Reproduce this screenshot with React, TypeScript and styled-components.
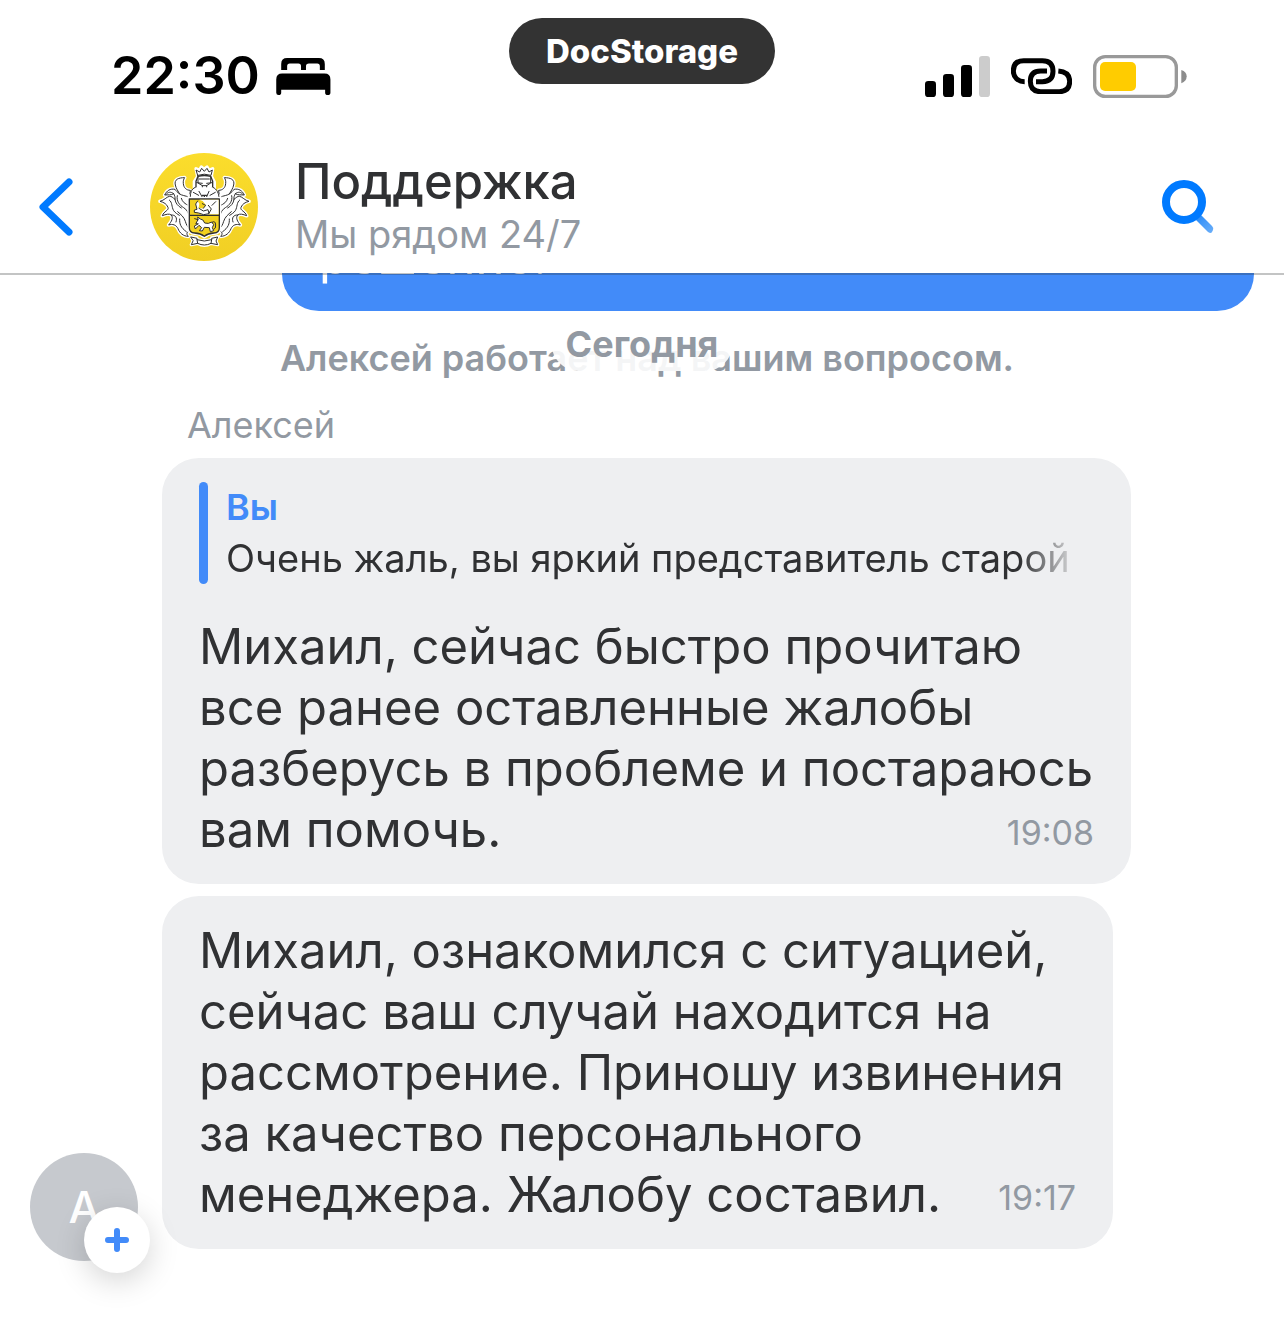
import React from "react";
import styled, { createGlobalStyle } from "styled-components";

const color = {
  ink: "#303133",
  muted: "#9299a2",
  blue: "#428bf9",
  action: "#007aff",
  bubble: "#eeeff1",
};

const GlobalStyle = createGlobalStyle`
  *, *::before, *::after { box-sizing: border-box; }
  body {
    margin: 0;
    background: #fff;
    color: ${color.ink};
    font-family: Inter, Roboto, "Liberation Sans", sans-serif;
  }
  button { border: 0; padding: 0; background: none; font: inherit; cursor: pointer; }
  svg { display: block; flex: none; }
  p, h1, h2 { margin: 0; }
`;

const Screen = styled.div`
  min-height: 100vh;
  display: flex;
  flex-direction: column;
  overflow: hidden;
`;

const TopBar = styled.header`
  position: relative;
  z-index: 2;
  margin-bottom: -2px;
  background: #fff;
  background-clip: padding-box;
  border-bottom: 2px solid rgba(40, 44, 44, 0.28);
`;

const StatusBar = styled.div`
  display: grid;
  grid-template-columns: 1fr auto 1fr;
  align-items: center;
  height: 134px;
  padding: 18px 97px 0;
`;

const StatusGroup = styled.div<{ $end?: boolean; $gap: number }>`
  display: flex;
  align-items: center;
  justify-content: ${(p) => (p.$end ? "flex-end" : "flex-start")};
  gap: ${(p) => p.$gap}px;
  padding-left: ${(p) => (p.$end ? 0 : 14)}px;
`;

const Clock = styled.time`
  font-size: 52px;
  font-weight: 600;
  line-height: 60px;
  color: #000;
`;

const AppPill = styled.div`
  align-self: start;
  padding: 0 37px;
  border-radius: 33px;
  background: #333;
  color: #fff;
  font-size: 33px;
  font-weight: 800;
  line-height: 66px;
`;

const NavRow = styled.div`
  display: flex;
  align-items: center;
  padding: 19px 70px 12px 39px;
`;

const BackButton = styled.button`
  width: 111px;
`;

const Titles = styled.div`
  flex: 1;
  padding: 0 0 4px 37px;
`;

const Title = styled.h1`
  font-size: 49px;
  font-weight: 500;
  line-height: 58px;
`;

const Subtitle = styled.p`
  font-size: 38px;
  line-height: 46px;
  color: ${color.muted};
`;

const Chat = styled.main`
  position: relative;
  flex: 1;
  display: flex;
  flex-direction: column;
`;

const Bubble = styled.article<{ $own?: boolean; $inset?: number }>`
  padding: 24px 37px;
  border-radius: 37px;
  background: ${(p) => (p.$own ? color.blue : color.bubble)};
  color: ${(p) => (p.$own ? "#fff" : color.ink)};
  margin-right: ${(p) => p.$inset ?? 0}px;
`;

const OwnRow = styled.div`
  margin-top: -71px;
  padding: 0 30px 0 282px;
`;

const Body = styled.p`
  font-size: 49px;
  line-height: 61px;
  white-space: pre-line;
`;

const SystemNote = styled.p`
  padding: 25px 0 0 10px;
  text-align: center;
  font-size: 36px;
  font-weight: 600;
  line-height: 44px;
  color: ${color.muted};
`;

const DateBadge = styled.div`
  position: absolute;
  top: 44px;
  left: 50%;
  transform: translateX(-50%);
  padding: 5px 14px;
  border-radius: 27px;
  background: rgba(255, 255, 255, 0.9);
  font-size: 36px;
  font-weight: 700;
  line-height: 44px;
  color: ${color.muted};
`;

const Thread = styled.section`
  display: grid;
  grid-template-columns: 162px 1fr;
  padding: 24px 153px 48px 0;
`;

const AvatarCell = styled.div`
  align-self: end;
  padding-left: 30px;
`;

const Avatar = styled.div`
  position: relative;
  display: grid;
  place-items: center;
  width: 108px;
  height: 108px;
  border-radius: 50%;
  background: #c6c9ce;
  color: #fff;
  font-size: 44px;
  font-weight: 500;
`;

const AddButton = styled.button`
  position: absolute;
  right: -12px;
  bottom: -12px;
  display: grid;
  place-items: center;
  width: 66px;
  height: 66px;
  border-radius: 50%;
  background: #fff;
  box-shadow: 0 8px 30px rgba(0, 0, 0, 0.17);
`;

const Messages = styled.div`
  display: flex;
  flex-direction: column;
  gap: 12px;
  min-width: 0;
  padding-bottom: 12px;
`;

const Author = styled.h2`
  padding-left: 25px;
  font-size: 36px;
  font-weight: 400;
  line-height: 42px;
  color: ${color.muted};
`;

const Quote = styled.blockquote`
  position: relative;
  margin: 0 0 32px;
  padding-left: 27px;
  &::before {
    content: "";
    position: absolute;
    inset: 0 auto 0 0;
    width: 9px;
    border-radius: 5px;
    background: ${color.blue};
  }
`;

const QuoteAuthor = styled.p`
  font-size: 36px;
  font-weight: 600;
  line-height: 51px;
  color: ${color.blue};
`;

const QuoteText = styled.p`
  width: 854px;
  max-width: 100%;
  overflow: hidden;
  white-space: nowrap;
  font-size: 38px;
  line-height: 51px;
  mask-image: linear-gradient(to right, #000 calc(100% - 60px), transparent);
`;

const LastLine = styled.div`
  display: flex;
  justify-content: space-between;
  align-items: center;
`;

const Stamp = styled.time`
  padding-top: 6px;
  font-size: 34px;
  line-height: 40px;
  color: ${color.muted};
`;

const BedIcon = () => (
  <svg width="55" height="37" viewBox="555 177 165 112" aria-hidden="true">
    <path d="M570 213V195Q570 177 588 177H684Q702 177 702 195V213H687V202Q687 194 679 194H654Q645 194 645 202V213H630V202Q630 194 622 194H596Q588 194 588 202V213Z" />
    <path d="M555 242Q555 224 573 224H701Q719 224 719 242V282Q719 289 711 289Q703 289 703 282V273H570V282Q570 289 562 289Q555 289 555 282Z" />
  </svg>
);

const SignalIcon = () => (
  <svg width="65" height="41" viewBox="75 75 195 123" aria-hidden="true">
    <rect x="75" y="150" width="33" height="48" rx="10" />
    <rect x="129" y="129" width="33" height="69" rx="10" />
    <rect x="183" y="102" width="33" height="96" rx="10" />
    <rect x="237" y="75" width="33" height="123" rx="10" fill="#ccc" />
  </svg>
);

const LinkIcon = () => (
  <svg width="61" height="36" viewBox="333 87 183 108" fill="none" stroke="#000" strokeWidth="15" aria-hidden="true">
    <path d="M374 158C354 158 340 145 340 126Q340 95 371 95H427Q459 95 459 127Q459 158 427 158H408" />
    <path d="M441 126H422Q391 126 391 157Q391 188 422 188H478Q509 188 509 157Q509 129 475 126" />
  </svg>
);

const BatteryIcon = () => (
  <svg width="94" height="43" viewBox="579 72 282 129" aria-hidden="true">
    <rect x="584" y="77" width="245" height="119" rx="32" fill="none" stroke="#999" strokeWidth="10" />
    <rect x="600" y="93" width="108" height="87" rx="15" fill="#fc0" />
    <path d="M844 117Q860 122 860 136Q860 151 844 157Z" fill="#8c8c8c" />
  </svg>
);

const BackIcon = () => (
  <svg width="35" height="58" viewBox="0 0 35 58" fill="none" stroke={color.action} strokeWidth="7" strokeLinecap="round" strokeLinejoin="round">
    <path d="M30 4L4 29L30 54" />
  </svg>
);

const SearchIcon = () => (
  <svg width="52" height="54" viewBox="0 0 52 54" fill="none">
    <defs>
      <linearGradient id="handle" x1="36" y1="36" x2="50" y2="52" gradientUnits="userSpaceOnUse">
        <stop stopColor="#2b8cf8" />
        <stop offset="1" stopColor="#68adf9" />
      </linearGradient>
    </defs>
    <path d="M34 40L39 35L50 46Q52 48 51 50L50 52Q49 54 46 52Z" fill="url(#handle)" />
    <circle cx="22" cy="22" r="18" stroke={color.action} strokeWidth="8" />
  </svg>
);

const wing =
  "M150 136C139 136 131 128 130 116C129 108 131 102 134 98C116 98 102 103 106 120C108 131 115 139 119 147C113 142 108 138 105 133C91 130 80 137 74 150C84 149 94 151 101 146C104 152 106 157 105 163C98 158 95 153 88 154C79 156 73 166 60 169C72 172 80 177 84 187C88 196 71 199 67 212C78 208 87 205 94 210C101 219 94 230 86 240C98 236 108 239 114 251C119 264 130 274 145 274C139 268 139 262 148 258V160Z";

const Feathers = () => (
  <g>
    <path d={wing} fill="#fff" stroke="#fff" strokeWidth="11" />
    <path d={wing} fill="#fff" />
    <path d="M78 148C84 141 92 139 101 146M119 147C125 152 136 151 147 157M105 163C106 175 114 183 124 189M88 165C98 173 94 185 101 197C106 204 112 207 118 211M112 152C108 168 119 181 131 188C140 194 145 201 147 213M124 160C127 171 135 177 147 182M94 210C106 209 113 218 108 231M113 200C123 209 132 216 136 229C139 240 143 246 148 249M119 222C118 236 122 248 139 260" />
  </g>
);

const CrestLogo = () => (
  <svg width="108" height="108" viewBox="30 24 324 324" role="img" aria-label="Герб">
    <defs>
      <linearGradient id="gold" x1="0" y1="0" x2="0" y2="1">
        <stop stopColor="#fbdd2c" />
        <stop offset="1" stopColor="#f1cf24" />
      </linearGradient>
    </defs>
    <circle cx="192" cy="186" r="162" fill="url(#gold)" />
    <g fill="none" stroke="#303030" strokeWidth="3" strokeLinejoin="round" strokeLinecap="round">
      <Feathers />
      <g transform="translate(387 0) scale(-1 1)">
        <Feathers />
      </g>
      <path d="M168 71L179 76L184 66L192 73L201 66L207 76L218 71L214 94L223 111V139L240 157V162H147V157L163 139V110L173 94Z" fill="#fff" stroke="#fff" strokeWidth="10" />
      <path d="M173 91L168 75L179 81L185 70L193 79L201 70L207 81L217 75L213 91Q193 84 173 91Z" fill="#fff" />
      <path d="M174 94Q193 89 212 94L218 109V127L207 140L193 147L178 139L168 127V109Z" fill="#fff" strokeWidth="4" />
      <path d="M174 96V114L187 122V137M212 96V114L200 122V137M187 122H200M170 113L187 115M216 113L200 115M178 102H208" />
      <path d="M166 127C152 132 151 146 151 160H237C237 146 231 132 219 127M177 139L190 162M207 139L197 162M160 142L176 151M226 142L210 151" fill="#fff" />
      <path d="M187 151H200M193 151V163" strokeWidth="4" />
      <path d="M148 162H238V248Q238 263 222 264Q204 265 193 274Q182 265 164 264Q148 263 148 248Z" fill="#f2d11f" stroke="#fff" strokeWidth="12" />
      <path d="M148 162H238V248Q238 263 222 264Q204 265 193 274Q182 265 164 264Q148 263 148 248Z" fill="#f2d11f" strokeWidth="4" />
      <path d="M178 164H236V208H208Q191 216 176 204L164 201L163 194L171 192L167 177L173 168L178 176L176 190L190 190L197 179L188 168Z" fill="#fff" stroke="none" />
      <path d="M150 211H236" strokeWidth="4" />
      <path d="M173 168L167 177L171 193L163 195V202L176 204Q190 213 207 206L204 194L190 198L177 190M187 176L197 181L190 190M205 181L214 192L207 205M227 170L216 181" />
      <path d="M168 235L174 224L173 216L181 222Q190 222 194 234Q205 238 215 231L221 239L217 248L221 257L211 260L208 248L193 247L187 258L178 257L185 248L177 241L166 252L163 243L174 237Z" fill="#fff" />
      <path d="M216 232Q226 225 227 240Q228 251 222 253M174 224L164 221" />
      <path d="M153 275L171 279V283Q193 291 215 283V279L233 275L228 288L233 299L213 295Q193 307 173 295L154 299L159 288Z" fill="#fff" stroke="#fff" strokeWidth="10" />
      <path d="M153 276L171 280V284Q193 292 215 284V280L233 276L228 288L233 299L213 295Q193 305 173 295L154 299L159 288ZM171 284L173 295M215 284L213 295" fill="#fff" />
    </g>
  </svg>
);

export default function App() {
  return (
    <Screen>
      <GlobalStyle />
      <TopBar>
        <StatusBar>
          <StatusGroup $gap={16}>
            <Clock>22:30</Clock>
            <BedIcon />
          </StatusGroup>
          <AppPill>DocStorage</AppPill>
          <StatusGroup $end $gap={21}>
            <SignalIcon />
            <LinkIcon />
            <BatteryIcon />
          </StatusGroup>
        </StatusBar>
        <NavRow>
          <BackButton type="button" aria-label="Назад">
            <BackIcon />
          </BackButton>
          <CrestLogo />
          <Titles>
            <Title>Поддержка</Title>
            <Subtitle>Мы рядом 24/7</Subtitle>
          </Titles>
          <button type="button" aria-label="Поиск">
            <SearchIcon />
          </button>
        </NavRow>
      </TopBar>
      <Chat>
        <OwnRow>
          <Bubble $own>
            <Body>решение.</Body>
          </Bubble>
        </OwnRow>
        <SystemNote>Алексей работает над вашим вопросом.</SystemNote>
        <DateBadge>Сегодня</DateBadge>
        <Thread>
          <AvatarCell>
            <Avatar>
              А
              <AddButton type="button" aria-label="Добавить">
                <svg width="24" height="24" viewBox="0 0 24 24" stroke={color.blue} strokeWidth="6" strokeLinecap="round">
                  <path d="M12 3V21M3 12H21" />
                </svg>
              </AddButton>
            </Avatar>
          </AvatarCell>
          <Messages>
            <Author>Алексей</Author>
            <Bubble>
              <Quote>
                <QuoteAuthor>Вы</QuoteAuthor>
                <QuoteText>Очень жаль, вы яркий представитель старой</QuoteText>
              </Quote>
              <Body>{"Михаил, сейчас быстро прочитаю\nвсе ранее оставленные жалобы\nразберусь в проблеме и постараюсь"}</Body>
              <LastLine>
                <Body>вам помочь.</Body>
                <Stamp>19:08</Stamp>
              </LastLine>
            </Bubble>
            <Bubble $inset={18}>
              <Body>{"Михаил, ознакомился с ситуацией,\nсейчас ваш случай находится на\nрассмотрение. Приношу извинения\nза качество персонального"}</Body>
              <LastLine>
                <Body>менеджера. Жалобу составил.</Body>
                <Stamp>19:17</Stamp>
              </LastLine>
            </Bubble>
          </Messages>
        </Thread>
      </Chat>
    </Screen>
  );
}
